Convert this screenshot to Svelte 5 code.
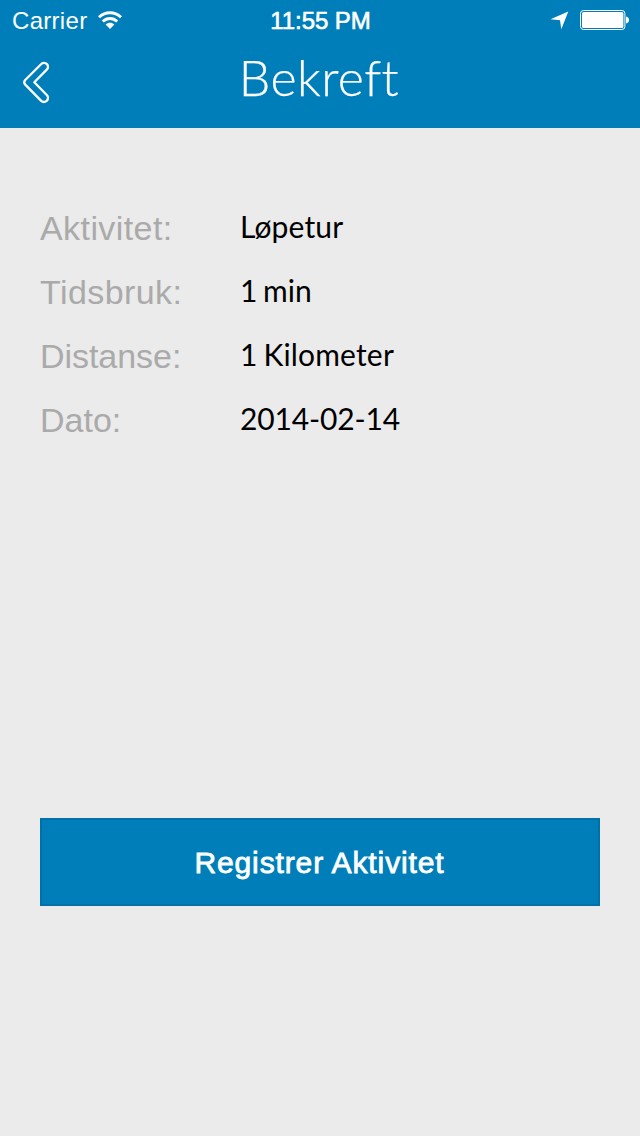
<script>
  const rows = [
    { label: 'Aktivitet:', value: 'Løpetur', labelSpacing: 0.42, valueSpacing: 0.15 },
    { label: 'Tidsbruk:', value: '1 min', labelSpacing: 0.42, valueSpacing: 0 },
    { label: 'Distanse:', value: '1 Kilometer', labelSpacing: -0.05, valueSpacing: 0.17 },
    { label: 'Dato:', value: '2014-02-14', labelSpacing: 0, valueSpacing: -0.15 }
  ];
</script>

<div class="screen">
  <header>
    <div class="status">
      <div class="left">
        <span class="carrier">Carrier</span>
        <svg class="wifi" width="24" height="18" viewBox="0 0 24 18">
          <g fill="none" stroke="#fff" stroke-width="2.9">
            <path d="M1 6.3C7.3 .2 16.7 .2 23 6.3" />
            <path d="M4.8 10.5C9 6.5 15 6.5 19.2 10.5" />
          </g>
          <path d="M7.6 13.5C10.2 11.2 13.8 11.2 16.4 13.5L12 18Z" fill="#fff" />
        </svg>
      </div>
      <span class="time">11:55 PM</span>
      <div class="right">
        <svg width="19" height="19" viewBox="0 0 19 19"><path d="M18.3 .5L11.3 18.3L10 9.2L.5 8.2Z" fill="#fff" /></svg>
        <svg width="49" height="20" viewBox="0 0 49 20">
          <rect x=".5" y=".5" width="44.4" height="19" rx="3" fill="none" stroke="#fff" stroke-width="1" />
          <rect x="2" y="2" width="41.4" height="16" rx="1.6" fill="#fff" />
          <path d="M46 6.5Q49 7.2 49 10T46 13.5Z" fill="#fff" />
        </svg>
      </div>
    </div>
    <div class="nav">
      <button class="back" aria-label="Tilbake">
        <svg width="28" height="42" viewBox="0 0 28 42">
          <path d="M18.3 2L2 18.2Q0.4 20.4 2 22.4L18.2 38.9C20.8 41.2 25 39.4 25 35.8Q25 34.4 24 33.3L11.3 20.3L24 7.4Q25 6.4 25 5C25 1.4 20.8-.3 18.3 2Z" fill="none" stroke="#fff" stroke-width="2.3" stroke-linejoin="round" />
        </svg>
      </button>
      <h1>Bekreft</h1>
    </div>
  </header>
  <main>
    <dl>
      {#each rows as row}
        <div class="row">
          <dt style="letter-spacing: {row.labelSpacing}px">{row.label}</dt>
          <dd style="letter-spacing: {row.valueSpacing}px">{row.value}</dd>
        </div>
      {/each}
    </dl>
    <button class="submit">Registrer Aktivitet</button>
  </main>
</div>

<style>
  :global(body) { margin: 0; background: #ebebeb; }
  .screen { width: 640px; height: 1136px; background: #ebebeb; display: flex; flex-direction: column; font-family: "Liberation Sans", Arial, sans-serif; overflow: hidden; }
  header { height: 128px; background: #007eb9; color: #fff; flex: none; }
  .status { height: 40px; display: grid; grid-template-columns: 1fr auto 1fr; align-items: center; padding: 0 11px 0 12px; box-sizing: border-box; }
  .left { display: flex; align-items: center; gap: 11px; }
  .carrier { font-size: 24px; line-height: 40px; padding-top: 1px; height: 39px; letter-spacing: .3px; }
  .time { font-size: 24px; line-height: 40px; padding-top: 1px; height: 39px; letter-spacing: -.05px; -webkit-text-stroke: .65px #fff; }
  .right { display: flex; justify-content: flex-end; align-items: center; gap: 11px; }
  .nav { height: 88px; display: grid; grid-template-columns: 120px 1fr 120px; }
  button { font-family: inherit; border: 0; }
  .back { background: none; padding: 22px 0 0 22.5px; display: flex; align-items: flex-start; }
  .back svg { display: block; overflow: visible; }
  h1 { margin: 0; padding: 7px 2px 0 0; font: 300 50px/60px Lato, sans-serif; font-variant-ligatures: none; letter-spacing: .4px; text-align: center; -webkit-text-stroke: .25px #fff; }
  main { flex: 1; padding: 68px 40px 0; }
  dl { margin: 0; height: 622px; }
  .row { height: 64px; display: grid; grid-template-columns: 200px 1fr; line-height: 64px; }
  dt { font-size: 34px; color: #aaa; }
  dd { margin: 0; font: 400 30px/60px Lato, sans-serif; word-spacing: -2px; color: #000; }
  .submit { display: block; width: 560px; height: 88px; padding: 2px 1px 0 0; box-sizing: border-box; background: #007eb9; border: 2px solid #0070a9; color: #fff; font-size: 30px; letter-spacing: .88px; -webkit-text-stroke: .8px #fff; }
</style>
